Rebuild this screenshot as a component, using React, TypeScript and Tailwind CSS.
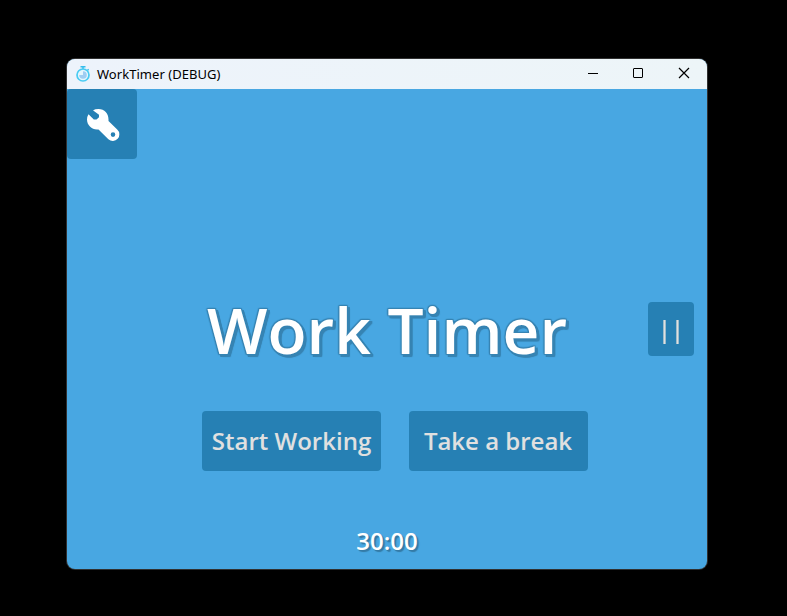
const buttonBase =
  "flex items-center justify-center rounded bg-[#2680b4] font-semibold text-[#e0e0e0]";

function StopwatchIcon() {
  return (
    <svg className="h-4 w-4" viewBox="0 0 16 16" fill="none">
      <path d="M5.5 .8h5M8 1v2M12.6 3.2l1 1" stroke="#35bdec" strokeWidth="1.5" />
      <circle cx="8" cy="9" r="6" fill="#e4f6fd" stroke="#48cbf3" strokeWidth="1.7" />
      <path d="M8 9V5.2A3.8 3.8 0 1 1 4.2 9Z" fill="#9fcdf2" />
    </svg>
  );
}

function WrenchIcon() {
  return (
    <svg className="h-8 w-8 overflow-visible" viewBox="0 0 32 32" fill="#fff">
      <path
        fillRule="evenodd"
        d="M6.200 1.200Q8 0 11.500 0C17.500 0 21.500 4.500 21.500 10.500V12L30.200 20.600A6.200 6.200 0 0 1 21.400 30.300L11.500 20.500H10C4.500 20.500 0 16 0 10.500Q0 7.500 1.500 5.200L6.800 10.400H9.500L12 8.200V5.800L6.200 1.600Z M26 23.300a2.300 2.300 0 1 0 0 4.600a2.300 2.300 0 0 0 0-4.600Z"
      />
    </svg>
  );
}

function TitleBar() {
  return (
    <header className="flex h-[30px] items-center bg-gradient-to-r from-[#edf3fb] to-[#edf5f8] pl-2">
      <StopwatchIcon />
      <span className="ml-[6px] font-['Noto_Sans',sans-serif] text-[13px] leading-none tracking-[0.04px] text-black">
        WorkTimer (DEBUG)
      </span>
      <div className="ml-auto flex items-center text-black">
        <svg className="h-[30px] w-[46px]" viewBox="0 0 46 30" fill="none" stroke="currentColor">
          <path d="M19 14.500h10" />
        </svg>
        <svg className="h-[30px] w-[46px]" viewBox="0 0 46 30" fill="none" stroke="currentColor">
          <rect x="18.500" y="9.500" width="9" height="9" rx="0.5" />
        </svg>
        <svg className="h-[30px] w-[46px]" viewBox="0 0 46 30" fill="none" stroke="currentColor">
          <path d="M18 9l10 10M28 9l-10 10" strokeWidth="1.2" />
        </svg>
      </div>
    </header>
  );
}

export default function App() {
  return (
    <div className="h-[616px] w-[787px] bg-black pl-[67px] pt-[59px] font-['Open_Sans',sans-serif]">
      <main className="flex h-[510px] w-[640px] flex-col overflow-hidden rounded-lg bg-[#48a7e2] shadow-[0_0_0_1px_#303030]">
        <TitleBar />
        <button className="flex h-[70px] w-[70px] items-center justify-center rounded bg-[#2680b4] pt-[2px] pl-[2px]">
          <WrenchIcon />
        </button>
        <div className="mt-[143px] grid h-[54px] grid-cols-[1fr_46px] items-start pr-[13px]">
          <h1 className="-mr-[59px] whitespace-nowrap text-center text-[64px] font-semibold leading-[56px] text-white [text-shadow:-1px_-1px_1px_#3784b3,0_-1px_1px_#3784b3,1px_-1px_1px_#3784b3,-1px_0_1px_#3784b3,-1px_1px_1px_#3784b3,1px_1px_0_#3784b3,2px_2px_0_#3784b3,3px_3px_1px_#3784b3,2px_3px_0_#3784b3,3px_2px_0_#3784b3,3px_1px_0_#3784b3,1px_3px_0_#3784b3]">
            Work Timer
          </h1>
          <button className={`${buttonBase} relative h-[54px] w-[46px] gap-[10px] pt-[6px]`}>
            <span className="h-6 w-[3px] border-x border-[#9fbccc] bg-[#e0e0e0]" />
            <span className="h-6 w-[3px] border-x border-[#9fbccc] bg-[#e0e0e0]" />
          </button>
        </div>
        <div className="mt-[55px] flex gap-7 pl-[135px]">
          <button className={`${buttonBase} h-[60px] w-[179px] text-2xl`}>Start Working</button>
          <button className={`${buttonBase} h-[60px] w-[179px] pr-px text-2xl`}>Take a break</button>
        </div>
        <p className="mt-[54px] text-center text-2xl font-semibold text-white [text-shadow:1px_1px_0_#347ba7,2px_2px_1px_#347ba7]">
          30:00
        </p>
      </main>
    </div>
  );
}
